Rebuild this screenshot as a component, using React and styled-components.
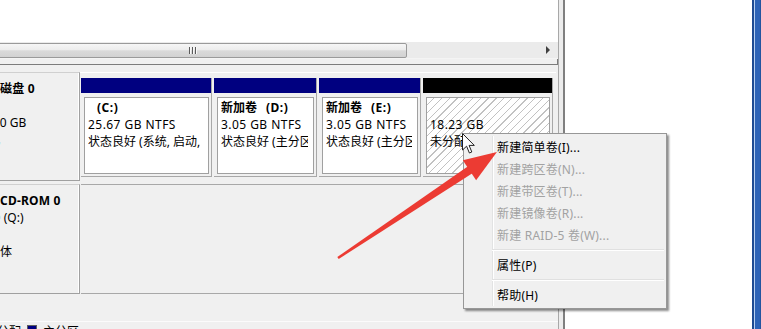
import React from 'react';
import styled, { createGlobalStyle } from 'styled-components';

const Global = createGlobalStyle`
  html, body { margin: 0; padding: 0; background: #fff; }
  body { font-family: "Noto Sans", "Noto Sans CJK SC", sans-serif; font-size: 12px; color: #000; }
  * { box-sizing: border-box; }
`;

const Screen = styled.div`
  position: relative;
  width: 761px;
  height: 329px;
  overflow: hidden;
  display: flex;
  background: #fff;
  font-family: "Noto Sans", "Noto Sans CJK SC", sans-serif;
  font-size: 12px;
  color: #000;
`;

const MainPane = styled.div`
  flex: none;
  width: 558px;
  display: flex;
  flex-direction: column;
  background: #f0f0f0;
  overflow: hidden;
`;

const ListArea = styled.div`
  flex: none;
  height: 42px;
  background: #fff;
`;

const HScroll = styled.div`
  flex: none;
  height: 17px;
  display: flex;
  align-items: center;
  background: #ebebeb;
  border-bottom: 1px solid #f4f4f4;
`;

const Thumb = styled.div`
  flex: none;
  margin-left: -21px;
  width: 428px;
  height: 15px;
  border: 1px solid #9a9a9a;
  border-radius: 2px;
  background: linear-gradient(#f6f6f6, #ececec 45%, #dadada 52%, #d2d2d2);
  display: flex;
  align-items: center;
  justify-content: center;
  gap: 1px;
`;

const Grip = styled.span`
  width: 2px;
  height: 7px;
  border-left: 1px solid #5a5a5a;
  border-right: 1px solid #f8f8f8;
`;

const Track = styled.div`
  flex: 1;
  height: 100%;
`;

const ScrollBtn = styled.div`
  flex: none;
  width: 17px;
  height: 100%;
  display: flex;
  align-items: center;
  padding-left: 5px;
  &::before {
    content: '';
    border-left: 4px solid #404040;
    border-top: 4px solid transparent;
    border-bottom: 4px solid transparent;
  }
`;

const Splitter = styled.div`
  flex: none;
  height: 6px;
  border-bottom: 1px solid #7c7c7c;
  border-right: 1px solid #7c7c7c;
`;

const DiskArea = styled.div`
  flex: 1;
  display: flex;
  flex-direction: column;
  padding-top: 7px;
  gap: 3px;
`;

const DiskRow = styled.div`
  flex: none;
  display: flex;
  height: ${p => p.$h}px;
  width: 556px;
`;

const Label = styled.div`
  flex: none;
  width: 80px;
  padding-top: 7px;
  border-top: 1px solid #d0d0d0;
  border-bottom: 1px solid #a0a0a0;
  border-right: 1px solid #a0a0a0;
  box-shadow: inset -1px 0 #fff;
  background: #f0f0f0;
  overflow: hidden;
  white-space: nowrap;
  line-height: 17px;
`;

const Title = styled.div`
  font-weight: bold;
  height: 17px;
  letter-spacing: 0.2px;
`;

const SubLine = styled.div`
  height: 17px;
  margin-left: -24px;
`;

const Partitions = styled.div`
  flex: 1;
  display: flex;
  gap: 2px;
  padding: 5px 2px 4px 1px;
  border-top: 1px solid #fff;
`;

const Column = styled.div`
  flex: none;
  width: ${p => p.$w}px;
  display: flex;
  flex-direction: column;
  border-right: 1px solid #a8a8a8;
  border-bottom: 1px solid #a8a8a8;
`;

const Header = styled.div`
  flex: none;
  height: 15px;
  background: ${p => (p.$free ? '#000' : '#000080')};
`;

const Body = styled.div`
  flex: 1;
  display: flex;
  padding: 4px 2px 2px 3px;
  background: #f0f0f0;
`;

const Box = styled.div`
  flex: 1;
  min-width: 0;
  padding: 1px 5px 1px 3px;
  border: 1px solid #a0a0a0;
  background: ${p =>
    p.$free
      ? 'repeating-linear-gradient(135deg, #fff 0 4.6px, #c2c2c2 4.6px 5.5px)'
      : '#fff'};
  line-height: 17px;
`;

const Clip = styled.div`
  overflow: hidden;
  white-space: nowrap;
`;

const VolName = styled.div`
  font-weight: bold;
  height: 17px;
`;

const Drive = styled.span`
  margin-left: 9px;
  letter-spacing: 0.5px;
`;

const Latin = styled.div`
  letter-spacing: 0.45px;
`;

const EmptyArea = styled.div`
  flex: 1;
  margin-left: 1px;
  border-top: 1px solid #a8a8a8;
  border-bottom: 1px solid #a8a8a8;
  border-right: 1px solid #c8c8c8;
  background: #f0f0f0;
`;

const Legend = styled.div`
  flex: none;
  margin-top: auto;
  height: 8px;
  border-top: 1px solid #fbfbfb;
  display: flex;
  align-items: flex-start;
  gap: 6px;
  padding-top: 2px;
  margin-left: -31px;
  white-space: nowrap;
  line-height: 16px;
`;

const LegendItem = styled.div`
  display: flex;
  align-items: flex-start;
  gap: 6px;
`;

const Swatch = styled.span`
  flex: none;
  width: 10px;
  height: 11px;
  margin-top: 1px;
  border: 1px solid #606060;
  background: ${p => p.$c};
`;

const Divider = styled.div`
  flex: none;
  width: 7px;
  background: #ececec;
  border-left: 1px solid #a8a8a8;
  border-right: 2px solid #808080;
`;

const SidePanel = styled.div`
  flex: 1;
  background: #fff;
`;

const WindowEdge = styled.div`
  flex: none;
  width: 9px;
  background: linear-gradient(
    to right,
    #1d4a92 0 2px,
    #b9d1f1 2px 3px,
    #2d63b7 3px 8px,
    #24549f 8px 9px
  );
`;

const Menu = styled.div`
  position: absolute;
  left: 463px;
  top: 133px;
  width: 204px;
  padding: 2px;
  border: 1px solid #979797;
  background: #f0f0f0;
  box-shadow: 2px 2px 2px rgba(0, 0, 0, 0.45);
  &::before {
    content: '';
    position: absolute;
    left: 28px;
    top: 2px;
    bottom: 2px;
    width: 1px;
    background: #e2e3e3;
    box-shadow: 1px 0 #fff;
  }
`;

const Item = styled.div`
  position: relative;
  height: 22px;
  display: flex;
  align-items: center;
  padding-left: 31px;
  white-space: nowrap;
  letter-spacing: 0.2px;
  color: ${p => (p.$disabled ? '#a2a2a2' : '#000')};
`;

const Sep = styled.div`
  position: relative;
  height: 8px;
  margin-left: 26px;
  &::after {
    content: '';
    position: absolute;
    left: 0;
    right: 0;
    top: 3px;
    height: 1px;
    background: #e0e0e0;
    box-shadow: 0 1px #fff;
  }
`;

const Overlay = styled.svg`
  position: absolute;
  left: 0;
  top: 0;
  pointer-events: none;
`;

const Cursor = styled.svg`
  position: absolute;
  left: 462px;
  top: 133px;
  pointer-events: none;
`;

const volumes = [
  { w: 131, name: '', drive: '(C:)', size: '25.67 GB NTFS', status: '状态良好 (系统, 启动, 页面文件, 活动, 故障转储, 主分区)' },
  { w: 103, name: '新加卷', drive: '(D:)', size: '3.05 GB NTFS', status: '状态良好 (主分区)' },
  { w: 102, name: '新加卷', drive: '(E:)', size: '3.05 GB NTFS', status: '状态良好 (主分区)' },
];

const menuItems = [
  { t: '新建简单卷(I)...' },
  { t: '新建跨区卷(N)...', d: true },
  { t: '新建带区卷(T)...', d: true },
  { t: '新建镜像卷(R)...', d: true },
  { t: '新建 RAID-5 卷(W)...', d: true },
  { sep: true },
  { t: '属性(P)' },
  { sep: true },
  { t: '帮助(H)' },
];

export default function App() {
  return (
    <>
      <Global />
      <Screen>
        <MainPane>
          <ListArea />
          <HScroll>
            <Thumb>
              <Grip />
              <Grip />
              <Grip />
            </Thumb>
            <Track />
            <ScrollBtn />
          </HScroll>
          <Splitter />
          <DiskArea>
            <DiskRow $h={109}>
              <Label>
                <Title>磁盘 0</Title>
                <SubLine>基本</SubLine>
                <SubLine>80.00 GB</SubLine>
                <SubLine>联机</SubLine>
              </Label>
              <Partitions>
                {volumes.map((v, i) => (
                  <Column key={i} $w={v.w}>
                    <Header />
                    <Body>
                      <Box>
                        <Clip>
                          <VolName>
                            {v.name}
                            <Drive>{v.drive}</Drive>
                          </VolName>
                          <Latin>{v.size}</Latin>
                          <div>{v.status}</div>
                        </Clip>
                      </Box>
                    </Body>
                  </Column>
                ))}
                <Column $w={130}>
                  <Header $free />
                  <Body>
                    <Box $free>
                      <Clip>
                        <VolName />
                        <Latin>18.23 GB</Latin>
                        <div>未分配</div>
                      </Clip>
                    </Box>
                  </Body>
                </Column>
              </Partitions>
            </DiskRow>
            <DiskRow $h={110}>
              <Label>
                <Title>CD-ROM 0</Title>
                <SubLine>DVD (Q:)</SubLine>
                <SubLine />
                <SubLine>无媒体</SubLine>
              </Label>
              <EmptyArea />
            </DiskRow>
            <Legend>
              <LegendItem>
                <Swatch $c="#000" />
                <span>未分配</span>
              </LegendItem>
              <LegendItem>
                <Swatch $c="#000080" />
                <span>主分区</span>
              </LegendItem>
            </Legend>
          </DiskArea>
        </MainPane>
        <Divider />
        <SidePanel />
        <WindowEdge />

        <Menu>
          {menuItems.map((m, i) =>
            m.sep ? <Sep key={i} /> : <Item key={i} $disabled={m.d}>{m.t}</Item>
          )}
        </Menu>

        <Cursor width="14" height="22" viewBox="0 0 14 22">
          <path
            d="M0.5 0.5 L0.5 17 L4.6 13.2 L7.4 20 L9.8 19 L7.1 12.4 L12.3 12.4 Z"
            fill="#fff"
            stroke="#222"
            strokeWidth="1"
            strokeLinejoin="round"
          />
        </Cursor>

        <Overlay width="761" height="329" viewBox="0 0 761 329">
          <g transform="translate(338 258) rotate(-33.69)">
            <path d="M0 -1.2 L163 -4.2 L163 4.2 L0 1.2 Z" fill="#ec3b33" />
            <path d="M158 -12 L191 0 L158 12 Z" fill="#ec3b33" />
          </g>
        </Overlay>
      </Screen>
    </>
  );
}
